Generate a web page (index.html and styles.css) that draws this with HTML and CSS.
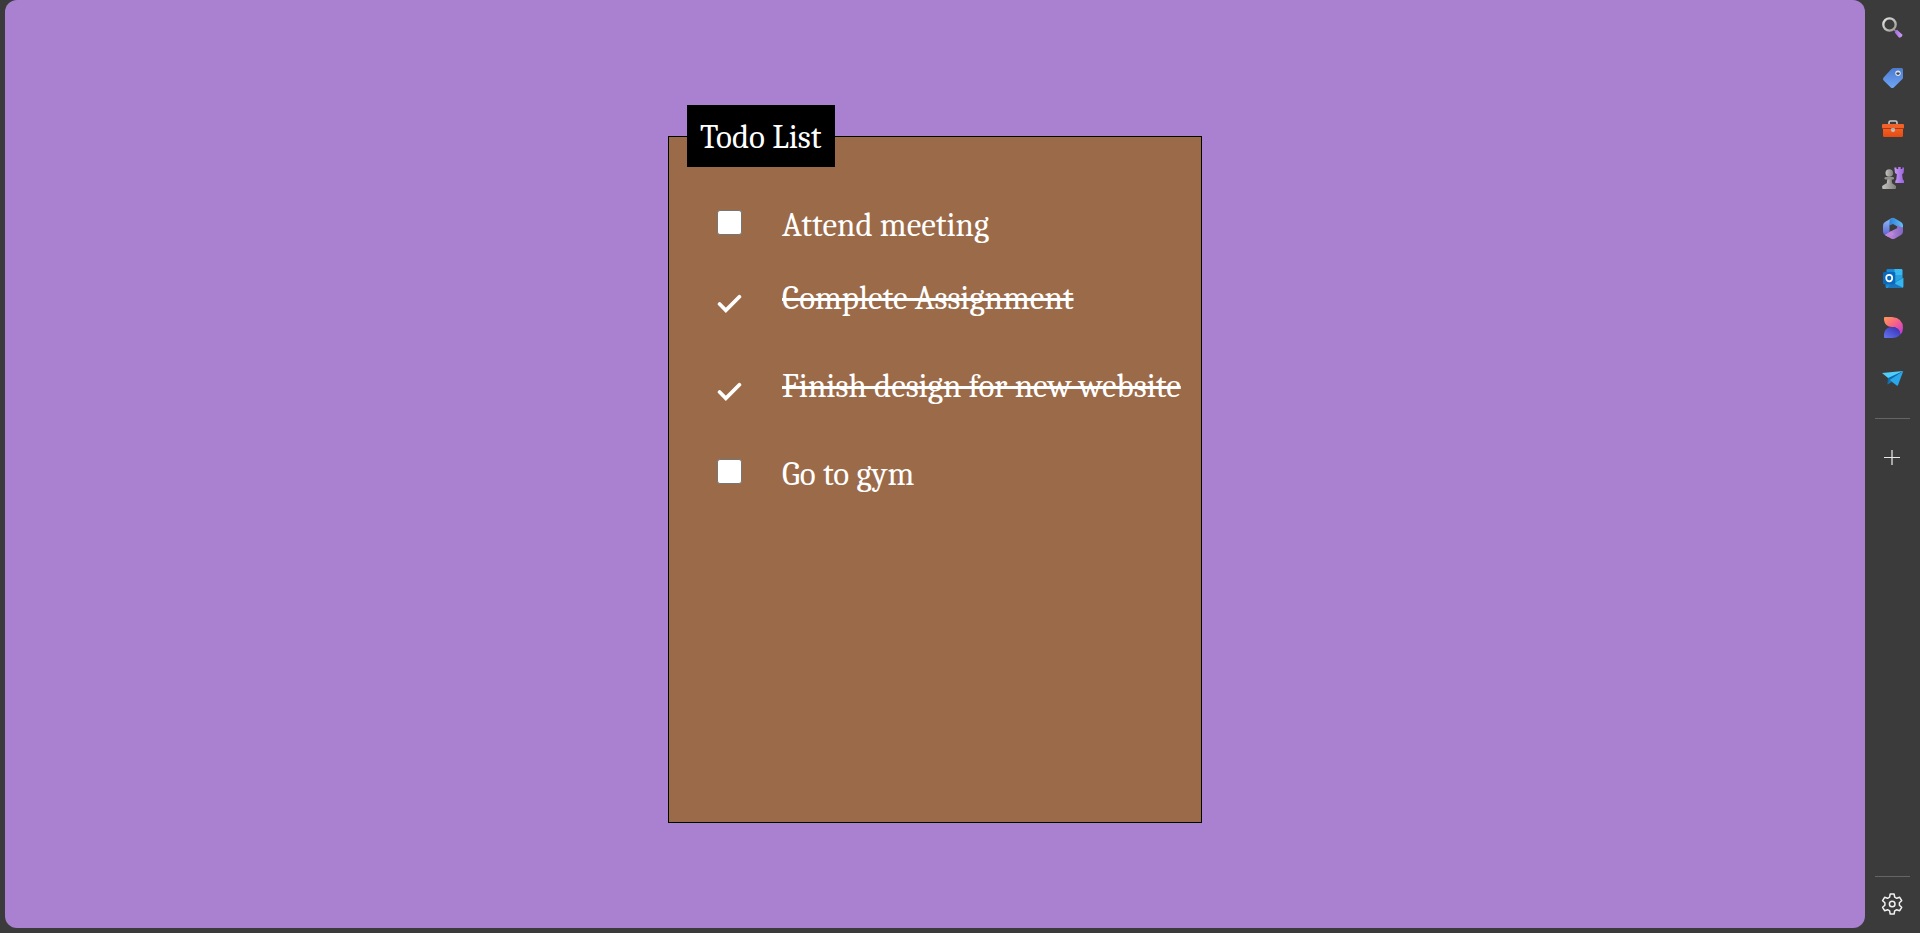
FILE: index.html
```html
<!DOCTYPE html>
<html lang="en">
<head>
<meta charset="utf-8">
<title>Todo List</title>
<link rel="stylesheet" href="styles.css">
</head>
<body>
<main class="page">
  <section class="todo">
    <h1 class="todo-title">Todo List</h1>
    <ul class="todo-list">
      <li class="todo-item compact"><input class="todo-check" type="checkbox" id="t1"><label for="t1">Attend meeting</label></li>
      <li class="todo-item"><input class="todo-check" type="checkbox" id="t2" checked><label for="t2">Complete Assignment</label></li>
      <li class="todo-item"><input class="todo-check" type="checkbox" id="t3" checked><label for="t3">Finish design for new website</label></li>
      <li class="todo-item"><input class="todo-check" type="checkbox" id="t4"><label for="t4">Go to gym</label></li>
    </ul>
  </section>
</main>
<nav class="sidebar" aria-label="Sidebar">
  <button class="tool" aria-label="Search"><svg viewBox="0 0 24 24">
    <defs><linearGradient id="s1" x1="0" y1="0" x2="1" y2="1"><stop offset="0" stop-color="#e4e4e2"/><stop offset="1" stop-color="#9b9995"/></linearGradient><linearGradient id="s2"><stop offset="0" stop-color="#a66be0"/><stop offset="1" stop-color="#cf9cf7"/></linearGradient></defs>
    <path d="M13.500 13l2 2" stroke="#8d8b88" stroke-width="1.500"/><circle cx="9.500" cy="8.500" r="6.200" fill="none" stroke="url(#s1)" stroke-width="2.300"/><path d="M15.300 14.700l1.700-.9 5.200 4.700q.6 1-.4 2l-1.500 1.100q-1 .3-1.700-.4l-3.800-4.600z" fill="url(#s2)"/></svg></button>
  <button class="tool" aria-label="Shopping"><svg viewBox="0 0 24 24">
    <defs><linearGradient id="g1" x1="0" y1="0" x2="0" y2="1"><stop offset="0" stop-color="#4a7bcf"/><stop offset="1" stop-color="#70a5f6"/></linearGradient></defs>
    <path d="M13.500 2h8q1.500 0 1.500 1.500v8q0 1-.8 1.800l-8.400 8.200q-1.600 1.200-3 0l-7.200-7q-1.300-1.500 0-3l8-8.700q.8-.8 1.900-.8z" fill="url(#g1)"/><circle cx="18" cy="7.200" r="2.700" fill="#dfe4ee"/><circle cx="18" cy="7.200" r="1.500" fill="#293448"/><path d="M18 5.200v2" stroke="#dfe4ee"/></svg></button>
  <button class="tool" aria-label="Tools"><svg viewBox="0 0 24 24">
    <defs><linearGradient id="b1" x1="0" y1="0" x2="0" y2="1"><stop offset="0" stop-color="#f66a2a"/><stop offset="1" stop-color="#e64a12"/></linearGradient></defs>
    <path d="M9 9V6.500Q9 5 10.500 5h5Q17 5 17 6.500V9" fill="none" stroke="#c9c7c5" stroke-width="1.600"/><rect x="3" y="9" width="20" height="12" rx="1.200" fill="url(#b1)"/><rect x="2" y="8" width="22" height="4.500" rx="1" fill="#ef6229"/><path d="M2.500 12.500h21" stroke="#b63510"/><circle cx="13" cy="14" r="2" fill="#c7c2bf"/><rect x="11.500" y="12" width="3" height="2" fill="#aeb0b0"/></svg></button>
  <button class="tool" aria-label="Games"><svg viewBox="0 0 24 24">
    <defs><linearGradient id="c1"><stop offset="0" stop-color="#c5c4c1"/><stop offset="1" stop-color="#7f7e7b"/></linearGradient><linearGradient id="c2"><stop offset="0" stop-color="#c69af4"/><stop offset="1" stop-color="#9960dd"/></linearGradient></defs>
    <path d="M14.300 1.500h2.200V3h1.700V1h2.500v2h1.600V1.500h1.900l-.6 5.500-1.500 1.200.7 5.300 1.500 1.500v2h-9v-2l1-1.500.6-5.300L15 7z" fill="url(#c2)"/>
    <path d="M7.500 12h4l.8 6h-5.600z" fill="url(#c1)"/><circle cx="9.300" cy="7" r="3.800" fill="url(#c1)"/><rect x="4.500" y="11" width="9.500" height="2.500" rx="1.200" fill="#918f8b"/><path d="M6 17.500h6.500L16 20v2q0 1-1 1H3.200q-1 0-1-1v-2z" fill="url(#c1)"/></svg></button>
  <button class="tool" aria-label="Microsoft 365"><svg viewBox="0 0 24 24">
    <defs><linearGradient id="m1" x1="0" y1="0" x2="0" y2="1"><stop offset="0" stop-color="#8fc0f5"/><stop offset="1" stop-color="#5b5bd0"/></linearGradient><linearGradient id="m2"><stop offset="0" stop-color="#2f7fd6"/><stop offset="1" stop-color="#62bdf5"/></linearGradient><linearGradient id="m3"><stop offset="0" stop-color="#d08fe0"/><stop offset="1" stop-color="#8066c4"/></linearGradient></defs>
    <path d="M12 2L5 6Q3 7.200 3 9.500v6.300Q3 18 5 19l2.500 1.400q2 .2 2-2V9L13 6z" fill="url(#m1)"/>
    <path d="M11 2.500q2-1.300 4 0l6 3.400q2 1.200 2 3.400v6.500l-5.500-3v-2.300L13 8 9.500 9.500V4.500z" fill="url(#m2)"/>
    <path d="M23 11v4.500q0 2.200-2 3.400l-6 3.500q-2 1.200-4 0l-6-3.400 6-3.800 6.500-3.200V8.500q3.500 3.500 5.500 2.500z" fill="url(#m3)"/><path d="M5 19l6-3.800L14.500 18 9 21.300z" fill="#bd86dc"/></svg></button>
  <button class="tool" aria-label="Outlook"><svg viewBox="0 0 24 24">
    <rect x="6.500" y="3" width="16" height="13" rx="1.200" fill="#1688d5"/><path d="M14.500 3h6.500q1.300 0 1.300 1.300V9h-7.800z" fill="#38baf0"/><path d="M14.500 9h7.800v7h-7.800z" fill="#28a1df"/><path d="M5.500 13l9 3 8.800-4.500V20.500q0 1.500-1.500 1.500H7q-1.500 0-1.500-1.500z" fill="#1787d0"/><path d="M23.300 12v8.500q0 1.500-1.500 1.500H7l-.8-.5z" fill="#37b5ed"/><path d="M12 16.500l11 5-1.200.5H7z" fill="#1b75bd"/><rect x="3" y="6" width="12.300" height="12.300" rx="1.200" fill="#0969bd"/><ellipse cx="9.200" cy="12.100" rx="3" ry="3.300" fill="none" stroke="#fff" stroke-width="1.700"/></svg></button>
  <button class="tool" aria-label="Designer"><svg viewBox="0 0 24 24">
    <defs><linearGradient id="d1" x1="0" y1="0" x2="1" y2="1"><stop offset="0" stop-color="#ff9b55"/><stop offset=".5" stop-color="#f65f8b"/><stop offset="1" stop-color="#b936e5"/></linearGradient><linearGradient id="d2" x1="0" y1="1" x2="1" y2="0"><stop offset="0" stop-color="#6576f0"/><stop offset="1" stop-color="#342bb0"/></linearGradient></defs>
    <path d="M5 1h7q11 1 11 11 0 4-2.500 6.500-1-7.500-8.500-7.500Q5 11 4 4V2q0-1 1-1z" fill="url(#d1)"/><path d="M12 11q8 0 8.500 7.500Q17 22 12 22H5q-1 0-1-1v-3q1-7 8-7z" fill="url(#d2)"/></svg></button>
  <button class="tool" aria-label="Drop"><svg viewBox="0 0 24 24">
    <path d="M2 7l21.300-2-14 8z" fill="#50cdf8"/><path d="M8 12l15.300-7-14 9.500-2 4z" fill="#086baf"/><path d="M23.300 5L18 19.200q-.5.8-1.300.3L9.500 14z" fill="#2aa6eb"/><path d="M7.300 18.500l2.200-4.500 2.300 1.900z" fill="#1479c0"/></svg></button>
  <hr class="rule">
  <button class="tool add" aria-label="Customize"><svg viewBox="0 0 24 24"><path d="M12 5v15" stroke="#a6a6a6" stroke-width="2"/><path d="M4 12.500h16" stroke="#e8e8e8"/></svg></button>
  <div class="bottom">
    <hr class="rule">
    <button class="tool settings" aria-label="Settings"><svg viewBox="0 0 24 24" fill="none" stroke="#f1f1f1" stroke-width="1.500" stroke-linejoin="round"><path d="M10.200 2h3.900l.6 3.200 2 1.100 3-1 2 3.400-2.300 2.100v2.400l2.300 2.100-2 3.400-3-1-2 1.100-.6 3.200h-3.900l-.6-3.200-2-1.100-3 1-2-3.400 2.300-2.100v-2.400L2.600 8.700l2-3.400 3 1 2-1.100z"/><circle cx="12.200" cy="12" r="2.800"/></svg></button>
  </div>
</nav>
</body>
</html>
```
FILE: styles.css
```css
* { box-sizing: border-box; }

body {
  margin: 0;
  min-height: 100vh;
  display: flex;
  background: #3b3b3b;
  color: #fff;
  font-family: Cambria, Caladea, "Liberation Serif", serif;
  font-size: 33px;
  line-height: 40px;
}

.page {
  flex: 1;
  margin: 0 0 5px 5px;
  border-radius: 12px;
  background: #aa80d0;
  display: flex;
  align-items: center;
  justify-content: center;
}

.todo {
  width: 534px;
  height: 77vh;
  display: flex;
  flex-direction: column;
  align-items: flex-start;
}

.todo-title {
  margin: 0 0 -31px 19px;
  padding: 12px 13px 10px;
  z-index: 1;
  background: #000;
  font-size: inherit;
  font-weight: 400;
}

.todo-list {
  flex: 1;
  align-self: stretch;
  margin: 0;
  padding: 68px 0 0 48px;
  list-style: none;
  border: 1px solid #000;
  background: #9b6a48;
}

.todo-item {
  display: grid;
  grid-template-columns: 25px auto;
  column-gap: 40px;
  margin-bottom: 48px;
  white-space: nowrap;
}

.todo-item.compact { margin-bottom: 33px; }

.todo-check {
  appearance: none;
  width: 25px;
  height: 25px;
  margin: 5px 0 0;
  border: 1px solid #767676;
  border-radius: 3px;
  background: #fff;
}

.todo-check:checked {
  margin-top: 13px;
  border: 0;
  background: url("data:image/svg+xml,%3Csvg xmlns='http://www.w3.org/2000/svg' viewBox='0 0 24 24'%3E%3Cpath d='M2.500 12.500L8.500 18.500 21.500 5.500' fill='none' stroke='white' stroke-width='3.600' stroke-linecap='round'/%3E%3C/svg%3E") no-repeat;
}

.todo-check:checked + label {
  text-decoration: line-through;
  text-decoration-thickness: 3px;
}

.sidebar {
  width: 55px;
  padding-top: 3px;
  display: flex;
  flex-direction: column;
}

.tool {
  display: block;
  width: 100%;
  height: 50px;
  padding: 13px 16px 13px 15px;
  border: 0;
  background: none;
}

.tool svg {
  display: block;
  width: 24px;
  height: 24px;
}

.rule {
  width: 35px;
  height: 1px;
  margin: 15px 10px 13px;
  border: 0;
  background: #656565;
}

.bottom { margin-top: auto; padding-bottom: 4px; }
.bottom .rule { margin: 0 10px 2px; }
```
